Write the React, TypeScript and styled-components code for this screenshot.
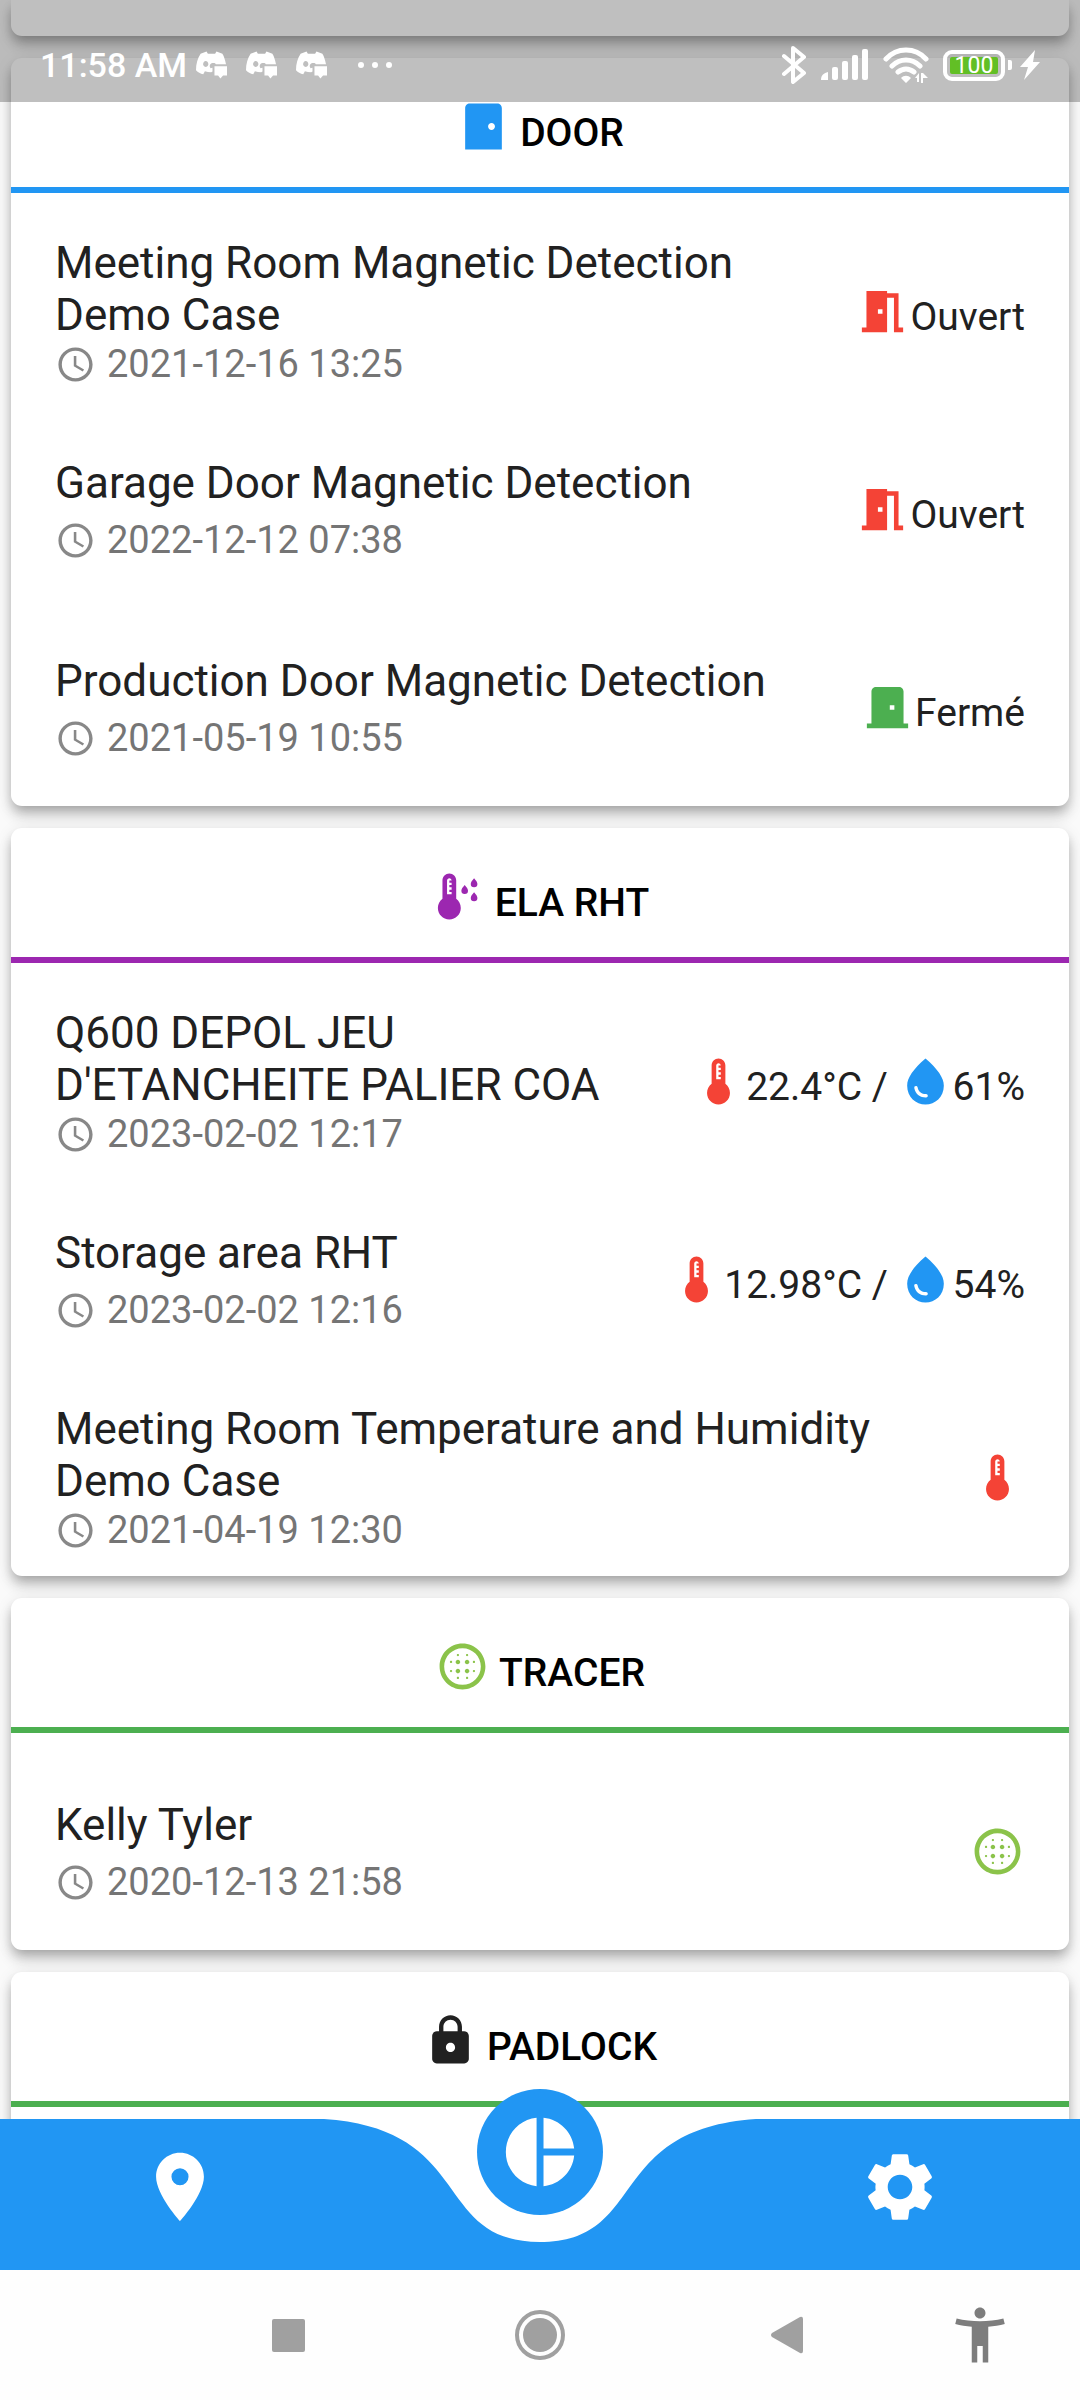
import React from "react";
import styled, { createGlobalStyle } from "styled-components";
import {
  MdAccessTime,
  MdAccessibilityNew,
  MdBlurCircular,
  MdLocationOn,
  MdLock,
  MdPieChart,
  MdSettings,
} from "react-icons/md";

const GlobalStyle = createGlobalStyle`
  *, *::before, *::after { box-sizing: border-box; }
  body {
    margin: 0;
    background: #fafafa;
    font-family: Roboto, "Noto Sans", sans-serif;
    color: #212121;
  }
  h2, h3, p, ul { margin: 0; padding: 0; }
  button { border: 0; padding: 0; background: none; color: inherit; font: inherit; cursor: pointer; }
  svg { display: block; flex: none; }
`;

const BLUE = "#2196f3";
const RED = "#f44336";
const GREEN = "#4caf50";
const LIME = "#8bc34a";
const PURPLE = "#9c27b0";

/* ---------- layout ---------- */

const Phone = styled.div`
  display: flex;
  flex-direction: column;
  height: 100vh;
  overflow: hidden;
`;

const Screen = styled.div`
  position: relative;
  flex: 1;
  min-height: 0;
  display: flex;
  flex-direction: column;
`;

const CardList = styled.main`
  flex: 1;
  min-height: 0;
  overflow: hidden;
  display: flex;
  flex-direction: column;
  gap: 22px;
  padding: 0 11px;
`;

const Card = styled.section<{ $grow?: boolean }>`
  flex: ${(p) => (p.$grow ? "1 0 auto" : "none")};
  background: #fff;
  border-radius: 11px;
  box-shadow: 0 6px 11px -3px rgba(0, 0, 0, 0.2), 0 11px 14px 0 rgba(0, 0, 0, 0.14),
    0 3px 16px 0 rgba(0, 0, 0, 0.1);
`;

const CardTail = styled(Card)`
  height: 36px;
  border-radius: 0 0 11px 11px;
`;

const CardHeader = styled.header<{ $accent: string }>`
  display: flex;
  justify-content: center;
  align-items: flex-end;
  gap: 9px;
  padding: 41px 44px 33px;
  border-bottom: 6px solid ${(p) => p.$accent};
`;

const CardTitle = styled.h2`
  font-size: 39px;
  line-height: 42px;
  font-weight: 500;
  color: #000;
`;

const Rows = styled.ul`
  list-style: none;
  padding-top: 19px;
`;

const Row = styled.li`
  display: flex;
  align-items: center;
  gap: 44px;
  height: 198px;
  padding: 0 44px;
`;

const RowBody = styled.div`
  flex: 1;
  min-width: 0;
  padding-top: 2px;
`;

const RowTitle = styled.h3`
  min-height: 60px;
  font-size: 44px;
  line-height: 52px;
  font-weight: 400;
`;

const RowDate = styled.p`
  display: flex;
  align-items: center;
  gap: 11px;
  font-size: 38px;
  line-height: 46px;
  color: #757575;
`;

const Reading = styled.div`
  display: flex;
  align-items: flex-end;
  font-size: 39px;
  line-height: 44px;
  white-space: pre;
`;

/* ---------- status bar ---------- */

const StatusBar = styled.div`
  position: absolute;
  inset: 0 0 auto 0;
  height: 102px;
  display: flex;
  justify-content: space-between;
  padding: 44px 40px 0;
  background: rgba(0, 0, 0, 0.25);
  color: #fff;
`;

const StatusSide = styled.div<{ $gap: number }>`
  display: flex;
  align-items: center;
  height: 42px;
  gap: ${(p) => p.$gap}px;
`;

const Clock = styled.span`
  font-size: 34px;
  line-height: 42px;
  font-weight: 500;
`;

const Notices = styled.div`
  display: flex;
  align-items: center;
  gap: 19px;
`;

const Dots = styled.div`
  display: flex;
  gap: 8px;
  margin-left: 22px;
`;

const Dot = styled.i`
  width: 6px;
  height: 6px;
  border-radius: 50%;
  background: #fff;
`;

const Power = styled.div`
  display: flex;
  align-items: center;
  gap: 8px;
`;

const Battery = styled.div`
  display: flex;
  align-items: center;
  gap: 3px;
  &::after {
    content: "";
    width: 4px;
    height: 10px;
    border-radius: 0 2px 2px 0;
    background: #fff;
  }
`;

const BatteryShell = styled.div`
  padding: 3px;
  border: 4px solid #fff;
  border-radius: 9px;
`;

const BatteryLevel = styled.div`
  width: 48px;
  height: 17px;
  border-radius: 2px;
  background: #62bf25;
  font-size: 23px;
  line-height: 18px;
  text-align: center;
`;

/* ---------- bottom navigation ---------- */

const TabBar = styled.nav`
  position: absolute;
  inset: auto 0 0 0;
  height: 151px;
`;

const TabCurve = styled.svg`
  width: 100%;
  height: 151px;
`;

const Tabs = styled.div`
  position: absolute;
  inset: 0 0 16px 0;
  display: grid;
  grid-template-columns: repeat(3, 1fr);
  color: #fff;
`;

const Tab = styled.button`
  display: flex;
  align-items: center;
  justify-content: center;
`;

const ActiveTab = styled(Tab)`
  position: absolute;
  left: calc(50% - 63px);
  top: -30px;
  width: 126px;
  height: 126px;
  border-radius: 50%;
  background: ${BLUE};
  color: #fff;
`;

const SystemNav = styled.nav`
  flex: none;
  height: 130px;
  display: grid;
  grid-template-columns: 15% repeat(3, 1fr) 15%;
  background: #fefefe;
  color: #a0a0a0;
`;

const SystemKey = styled.button`
  display: flex;
  align-items: center;
  justify-content: center;
`;

const AccessKey = styled(SystemKey)`
  justify-content: flex-start;
  padding-left: 29px;
  color: #7d7d7d;
`;

/* ---------- icons ---------- */

type IconProps = { color: string };

const Glyph = ({ color, d, children }: { color: string; d?: string; children?: React.ReactNode }) => (
  <svg width="55" height="55" viewBox="0 0 24 24" fill={color} aria-hidden="true">
    {d && <path d={d} />}
    {children}
  </svg>
);

const THERMO =
  "M15 13V5c0-1.66-1.34-3-3-3S9 3.34 9 5v8c-1.21.91-2 2.37-2 4 0 2.76 2.24 5 5 5s5-2.24 5-5c0-1.63-.79-3.09-2-4zm-4-8c0-.55.45-1 1-1s1 .45 1 1h-1v1h1v1h-1v1h1v1h-1v1h1v1h-2V5z";

const Thermometer = ({ color }: IconProps) => <Glyph color={color} d={THERMO} />;

const Drop = ({ color }: IconProps) => (
  <Glyph
    color={color}
    d="M12 2c-5.33 4.55-8 8.48-8 11.8 0 4.98 3.8 8.2 8 8.2s8-3.22 8-8.2c0-3.32-2.67-7.25-8-11.8zM7.83 14c.37 0 .67.26.74.62.41 2.22 2.28 2.98 3.64 2.87.43-.02.79.32.79.75 0 .4-.32.73-.72.75-2.13.13-4.62-1.09-5.19-4.12a.75.75 0 0 1 .74-.87z"
  />
);

const DoorOpen = ({ color }: IconProps) => (
  <Glyph color={color} d="M14 6v15H3v-2h2V3h9v1h5v15h2v2h-4V6h-3zm-4 5v2h2v-2h-2z" />
);

const DoorClosed = ({ color }: IconProps) => (
  <Glyph color={color} d="M19 19V5c0-1.1-.9-2-2-2H7c-1.1 0-2 .9-2 2v14H3v2h18v-2h-2zm-4-6h-2v-2h2v2z" />
);

const DoorSensor = ({ color }: IconProps) => (
  <Glyph
    color={color}
    d="M18 2H6c-1.1 0-2 .9-2 2v18h16V4c0-1.1-.9-2-2-2zm-2.5 11.5c-.83 0-1.5-.67-1.5-1.5s.67-1.5 1.5-1.5 1.5.67 1.5 1.5-.67 1.5-1.5 1.5z"
  />
);

const ThermoHumidity = ({ color }: IconProps) => {
  const drop = "c-.9 1.05-1.45 1.75-1.45 2.5a1.45 1.45 0 0 0 2.9 0c0-.75-.55-1.45-1.45-2.5z";
  return (
    <Glyph color={color}>
      <path transform="translate(-4 0)" d={THERMO} />
      <path d={`M14.7 7${drop}M18.8 4${drop}M18.8 10.1${drop}`} />
    </Glyph>
  );
};

const DiscordNotice = () => (
  <svg width="31" height="28" viewBox="0 0 94 84" fill="#fff" aria-hidden="true">
    <path
      fillRule="evenodd"
      d="M32 1 14 8C5 22 0 38 0 58c6 7 13 10 22 12l5-9c6 2 12 3 19 3l4-2V50l-6 2c-4-5-3-12 3-15 8-2 12 0 13 3h31C88 26 85 16 80 8L62 1l-4 7H36zM29 30a8 9 0 1 0 1 0z"
    />
    <path d="M56 46h38v28H82l-8 9-7-9H56z" />
  </svg>
);

const Bluetooth = () => (
  <svg width="25" height="40" viewBox="0 0 25 40" fill="none" stroke="#fff" strokeWidth="4" strokeLinejoin="round" strokeLinecap="round" aria-hidden="true">
    <path d="M2 11 22 28 11 37V3l11 9L2 29" />
  </svg>
);

const Signal = () => (
  <svg width="48" height="32" viewBox="0 0 48 32" fill="#fff" aria-hidden="true">
    <path d="M0 31c0-5 3-7 7-8v8z" />
    <rect x="11" y="18" width="6" height="13" rx="2" />
    <rect x="21" y="12" width="6" height="19" rx="2" />
    <rect x="31" y="6" width="6" height="25" rx="2" />
    <rect x="41" y="0" width="6" height="31" rx="2" />
  </svg>
);

const Wifi = () => (
  <svg width="46" height="36" viewBox="0 0 46 36" fill="none" stroke="#fff" strokeWidth="5" strokeLinecap="round" aria-hidden="true">
    <path d="M3 12C14 0 32 0 43 12M9 19c8-8 20-8 28 0M15 25c5-4 11-4 16 0" />
    <path fill="#fff" stroke="none" d="M18 31c3-3 7-3 10 0l-5 5zM32 31l4-5v9h-2v-4zM38 36v-10h2v5l5 0-5-5v10z" />
  </svg>
);

const Bolt = () => (
  <svg width="20" height="30" viewBox="0 0 20 30" fill="#fff" aria-hidden="true">
    <path d="M15 0 0 17h8L4 30 20 12h-7z" />
  </svg>
);

/* ---------- parts ---------- */

type SensorProps = { name: string; date: string; children: React.ReactNode };

const Sensor = ({ name, date, children }: SensorProps) => (
  <Row>
    <RowBody>
      <RowTitle>{name}</RowTitle>
      <RowDate>
        <MdAccessTime size={41} color="#888" aria-hidden="true" />
        <time>{date}</time>
      </RowDate>
    </RowBody>
    <Reading>{children}</Reading>
  </Row>
);

type GroupProps = {
  title: string;
  accent: string;
  icon: React.ReactNode;
  grow?: boolean;
  children?: React.ReactNode;
};

const Group = ({ title, accent, icon, grow, children }: GroupProps) => (
  <Card $grow={grow}>
    <CardHeader $accent={accent}>
      {icon}
      <CardTitle>{title}</CardTitle>
    </CardHeader>
    {children && <Rows>{children}</Rows>}
  </Card>
);

const Climate = ({ temperature, humidity }: { temperature: string; humidity: string }) => (
  <>
    <Thermometer color={RED} />
    <span>{`${temperature} / `}</span>
    <Drop color={BLUE} />
    <span>{humidity}</span>
  </>
);

export default function App() {
  return (
    <>
      <GlobalStyle />
      <Phone>
        <Screen>
          <CardList>
            <CardTail />
            <Group title="DOOR" accent={BLUE} icon={<DoorSensor color={BLUE} />}>
              <Sensor name="Meeting Room Magnetic Detection Demo Case" date="2021-12-16 13:25">
                <DoorOpen color={RED} />
                <span>Ouvert</span>
              </Sensor>
              <Sensor name="Garage Door Magnetic Detection" date="2022-12-12 07:38">
                <DoorOpen color={RED} />
                <span>Ouvert</span>
              </Sensor>
              <Sensor name="Production Door Magnetic Detection" date="2021-05-19 10:55">
                <DoorClosed color={GREEN} />
                <span>Fermé</span>
              </Sensor>
            </Group>
            <Group title="ELA RHT" accent={PURPLE} icon={<ThermoHumidity color={PURPLE} />}>
              <Sensor name="Q600 DEPOL JEU D'ETANCHEITE PALIER COA" date="2023-02-02 12:17">
                <Climate temperature="22.4°C" humidity="61%" />
              </Sensor>
              <Sensor name="Storage area RHT" date="2023-02-02 12:16">
                <Climate temperature="12.98°C" humidity="54%" />
              </Sensor>
              <Sensor name="Meeting Room Temperature and Humidity Demo Case" date="2021-04-19 12:30">
                <Thermometer color={RED} />
              </Sensor>
            </Group>
            <Group title="TRACER" accent={GREEN} icon={<MdBlurCircular size={55} color={LIME} />}>
              <Sensor name="Kelly Tyler" date="2020-12-13 21:58">
                <MdBlurCircular size={55} color={LIME} />
              </Sensor>
            </Group>
            <Group title="PADLOCK" accent={GREEN} icon={<MdLock size={55} color="#212121" />} grow />
          </CardList>

          <StatusBar>
            <StatusSide $gap={9}>
              <Clock>11:58 AM</Clock>
              <Notices>
                <DiscordNotice />
                <DiscordNotice />
                <DiscordNotice />
              </Notices>
              <Dots>
                <Dot />
                <Dot />
                <Dot />
              </Dots>
            </StatusSide>
            <StatusSide $gap={14}>
              <Bluetooth />
              <Signal />
              <Wifi />
              <Power>
                <Battery>
                  <BatteryShell>
                    <BatteryLevel>100</BatteryLevel>
                  </BatteryShell>
                </Battery>
                <Bolt />
              </Power>
            </StatusSide>
          </StatusBar>

          <TabBar>
            <TabCurve viewBox="0 0 1080 151" preserveAspectRatio="none" aria-hidden="true">
              <path fill={BLUE} d="M0 0H324C475 10 432 123 540 123S605 10 756 0H1080V151H0z" />
            </TabCurve>
            <Tabs>
              <Tab aria-label="Map">
                <MdLocationOn size={82} />
              </Tab>
              <span />
              <Tab aria-label="Settings">
                <MdSettings size={82} />
              </Tab>
            </Tabs>
            <ActiveTab aria-label="Dashboard">
              <MdPieChart size={82} />
            </ActiveTab>
          </TabBar>
        </Screen>

        <SystemNav>
          <span />
          <SystemKey aria-label="Recent apps">
            <svg width="33" height="33" viewBox="0 0 33 33" fill="currentColor">
              <rect width="33" height="33" rx="2" />
            </svg>
          </SystemKey>
          <SystemKey aria-label="Home">
            <svg width="50" height="50" viewBox="0 0 50 50" fill="currentColor">
              <circle cx="25" cy="25" r="23" fill="none" stroke="currentColor" strokeWidth="4" />
              <circle cx="25" cy="25" r="17" />
            </svg>
          </SystemKey>
          <SystemKey aria-label="Back">
            <svg width="42" height="38" viewBox="0 0 42 38" fill="currentColor">
              <path d="M1 17 29 1q3-1 3 2v32q0 3-3 2L1 21q-2-2 0-4z" />
            </svg>
          </SystemKey>
          <AccessKey aria-label="Accessibility">
            <MdAccessibilityNew size={66} />
          </AccessKey>
        </SystemNav>
      </Phone>
    </>
  );
}
